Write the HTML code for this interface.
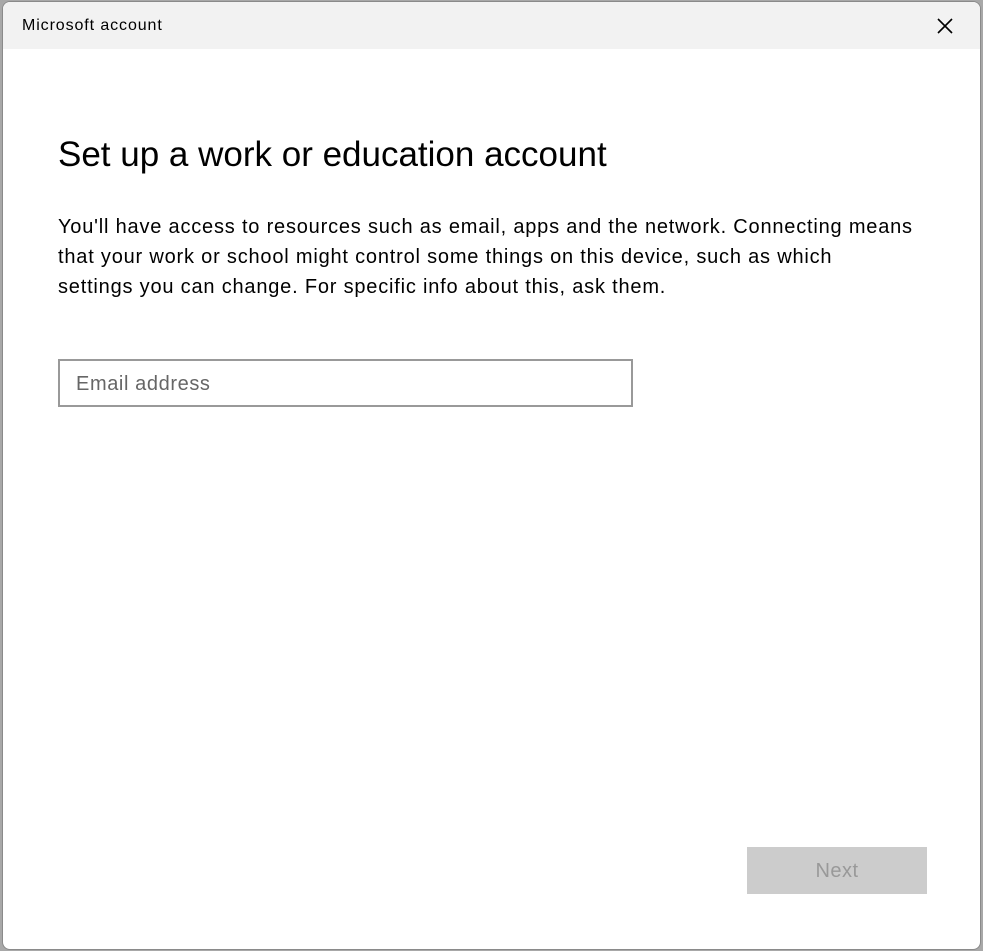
<!DOCTYPE html>
<html><head><style>
body{margin:0;width:983px;height:951px;background:#a8a8a8;position:relative;overflow:hidden;font-family:"Segoe UI","Liberation Sans",sans-serif;}
.win{position:absolute;left:2px;top:1px;width:977px;height:947px;background:#fff;border:1px solid #8a8a8a;border-radius:8px;overflow:hidden;}
.tb{height:47px;background:#f2f2f2;position:relative;}
.tb span{position:absolute;left:19px;top:15px;font-size:16px;letter-spacing:0.9px;color:#000;}
.x{position:absolute;left:933px;top:15px;}
h1{position:absolute;left:55px;top:133px;margin:0;font-weight:normal;font-size:35px;color:#000;letter-spacing:0px;}
p{position:absolute;left:55px;top:210px;margin:0;width:900px;font-size:20px;line-height:30px;color:#000;letter-spacing:0.8px;}
.in{position:absolute;left:55px;top:357px;width:571px;height:44px;border:2px solid #999;box-sizing:content-box;}
.in span{position:absolute;left:16px;top:12px;font-size:20px;color:#666;letter-spacing:0.6px;}
.btn{position:absolute;left:744px;top:845px;width:180px;height:47px;background:#ccc;color:#999;font-size:20px;text-align:center;line-height:49px;letter-spacing:0.5px;}
</style></head><body>
<div class="win">
<div class="tb"><span>Microsoft account</span>
<svg class="x" width="18" height="18" viewBox="0 0 18 18"><path d="M2 2L16 16M16 2L2 16" stroke="#000" stroke-width="1.6"/></svg></div>
<h1>Set up a work or education account</h1>
<p>You'll have access to resources such as email, apps and the network. Connecting means<br>that your work or school might control some things on this device, such as which<br>settings you can change. For specific info about this, ask them.</p>
<div class="in"><span>Email address</span></div>
<div class="btn">Next</div>
</div>
</body></html>
